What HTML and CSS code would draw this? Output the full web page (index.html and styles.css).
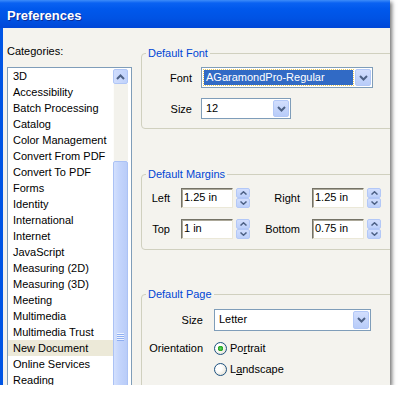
FILE: index.html
```html
<!DOCTYPE html>
<html lang="en">
<head>
    <meta charset="utf-8">
    <title>Preferences</title>
    <link rel="stylesheet" href="styles.css">
</head>
<body>

    <div class="window">
        <div class="titlebar"><span class="title">Preferences</span></div>

        <div class="content">
            <!-- categories list -->
            <div class="sidebar">
                <div class="cat-label">Categories:</div>
                <div class="listbox">
                    <ul class="items">
                        <li>3D</li>
                        <li>Accessibility</li>
                        <li>Batch Processing</li>
                        <li>Catalog</li>
                        <li>Color Management</li>
                        <li>Convert From PDF</li>
                        <li>Convert To PDF</li>
                        <li>Forms</li>
                        <li>Identity</li>
                        <li>International</li>
                        <li>Internet</li>
                        <li>JavaScript</li>
                        <li>Measuring (2D)</li>
                        <li>Measuring (3D)</li>
                        <li>Meeting</li>
                        <li>Multimedia</li>
                        <li>Multimedia Trust</li>
                        <li class="selected">New Document</li>
                        <li>Online Services</li>
                        <li>Reading</li>
                    </ul>
                    <div class="scrollbar">
                        <div class="sb-up">
                            <svg width="9" height="6" viewBox="0 0 9 6"><path d="M1 5 L4.5 1.5 L8 5" fill="none" stroke="#4d6185" stroke-width="2"/></svg>
                        </div>
                        <div class="sb-track"></div>
                        <div class="sb-thumb"><div class="grip"></div></div>
                    </div>
                </div>
            </div>

            <!-- settings -->
            <div class="panel">
                <fieldset class="group group-font">
                    <legend>Default Font</legend>
                    <div class="font-grid">
                        <span class="lbl">Font</span>
                        <div class="combo combo-font">
                            <span class="combo-value selected">AGaramondPro-Regular</span>
                            <span class="combo-btn"><svg width="9" height="6" viewBox="0 0 9 6"><path d="M1 1 L4.5 4.5 L8 1" fill="none" stroke="#4d6185" stroke-width="2"/></svg></span>
                        </div>
                        <span class="lbl">Size</span>
                        <div class="combo combo-size">
                            <span class="combo-value">12</span>
                            <span class="combo-btn"><svg width="9" height="6" viewBox="0 0 9 6"><path d="M1 1 L4.5 4.5 L8 1" fill="none" stroke="#4d6185" stroke-width="2"/></svg></span>
                        </div>
                    </div>
                </fieldset>

                <fieldset class="group group-margins">
                    <legend>Default Margins</legend>
                    <div class="margin-row">
                        <span class="lbl">Left</span>
                        <span class="field">1.25 in</span>
                        <span class="spin">
                            <span class="spin-btn"><svg width="7" height="4" viewBox="0 0 7 4"><path d="M0.5 3.5 L3.5 0.8 L6.5 3.5" fill="none" stroke="#4d6185" stroke-width="1.5"/></svg></span>
                            <span class="spin-btn"><svg width="7" height="4" viewBox="0 0 7 4"><path d="M0.5 0.5 L3.5 3.2 L6.5 0.5" fill="none" stroke="#4d6185" stroke-width="1.5"/></svg></span>
                        </span>
                        <span class="lbl wide">Right</span>
                        <span class="field">1.25 in</span>
                        <span class="spin">
                            <span class="spin-btn"><svg width="7" height="4" viewBox="0 0 7 4"><path d="M0.5 3.5 L3.5 0.8 L6.5 3.5" fill="none" stroke="#4d6185" stroke-width="1.5"/></svg></span>
                            <span class="spin-btn"><svg width="7" height="4" viewBox="0 0 7 4"><path d="M0.5 0.5 L3.5 3.2 L6.5 0.5" fill="none" stroke="#4d6185" stroke-width="1.5"/></svg></span>
                        </span>
                    </div>
                    <div class="margin-row">
                        <span class="lbl">Top</span>
                        <span class="field">1 in</span>
                        <span class="spin">
                            <span class="spin-btn"><svg width="7" height="4" viewBox="0 0 7 4"><path d="M0.5 3.5 L3.5 0.8 L6.5 3.5" fill="none" stroke="#4d6185" stroke-width="1.5"/></svg></span>
                            <span class="spin-btn"><svg width="7" height="4" viewBox="0 0 7 4"><path d="M0.5 0.5 L3.5 3.2 L6.5 0.5" fill="none" stroke="#4d6185" stroke-width="1.5"/></svg></span>
                        </span>
                        <span class="lbl wide">Bottom</span>
                        <span class="field">0.75 in</span>
                        <span class="spin">
                            <span class="spin-btn"><svg width="7" height="4" viewBox="0 0 7 4"><path d="M0.5 3.5 L3.5 0.8 L6.5 3.5" fill="none" stroke="#4d6185" stroke-width="1.5"/></svg></span>
                            <span class="spin-btn"><svg width="7" height="4" viewBox="0 0 7 4"><path d="M0.5 0.5 L3.5 3.2 L6.5 0.5" fill="none" stroke="#4d6185" stroke-width="1.5"/></svg></span>
                        </span>
                    </div>
                </fieldset>

                <fieldset class="group group-page">
                    <legend>Default Page</legend>
                    <div class="page-grid">
                        <span class="lbl">Size</span>
                        <div class="combo combo-page">
                            <span class="combo-value">Letter</span>
                            <span class="combo-btn"><svg width="9" height="6" viewBox="0 0 9 6"><path d="M1 1 L4.5 4.5 L8 1" fill="none" stroke="#4d6185" stroke-width="2"/></svg></span>
                        </div>
                        <span class="lbl">Orientation</span>
                        <div class="radios">
                            <label class="radio"><span class="dot checked"></span><span>Po<u>r</u>trait</span></label>
                            <label class="radio"><span class="dot"></span><span>L<u>a</u>ndscape</span></label>
                        </div>
                    </div>
                </fieldset>
            </div>
        </div>
    </div>

</body>
</html>
```

FILE: styles.css
```css
* {
    margin: 0;
    padding: 0;
    box-sizing: border-box;
}

body {
    background: #fff;
    font-family: "Liberation Sans", Arial, sans-serif;
    font-size: 11px;
    color: #000;
}

.window {
    width: 390px;
    height: 385px;
    background: #f4f3ee;
    box-shadow: 2px 2px 4px rgba(0, 0, 0, 0.55);
    overflow: hidden;
    display: flex;
    flex-direction: column;
}

/* title bar */
.titlebar {
    height: 28px;
    padding: 3px 0 0 7px;
    display: flex;
    align-items: center;
    background: linear-gradient(#3d8cf9 0, #0a62f2 3px, #0058ec 9px, #0053e4 18px, #0047d7 28px);
}

.title {
    color: #fff;
    font-weight: bold;
    font-size: 13px;
    text-shadow: 1px 1px 0 #0b2d9a;
}

.content {
    flex: 1;
    display: flex;
    gap: 9px;
    padding: 16px 0 0 4px;
    border-left: 3px solid #0055e5;
    min-height: 0;
}

/* categories */
.sidebar {
    width: 125px;
    flex-shrink: 0;
}

.cat-label {
    line-height: 14px;
}

.listbox {
    margin-top: 9px;
    height: 330px;
    display: flex;
    background: #fff;
    border: 1px solid #7f9db9;
}

.items {
    flex: 1;
    list-style: none;
}

.items li {
    height: 16px;
    line-height: 16px;
    padding-left: 5px;
    white-space: nowrap;
}

.items li.selected {
    background: #ece9d8;
}

.scrollbar {
    width: 18px;
    padding: 1px 3px 0 0;
    display: flex;
    flex-direction: column;
}

.sb-up {
    height: 15px;
    display: flex;
    align-items: center;
    justify-content: center;
    background: linear-gradient(90deg, #d0ddfd, #c0d2fb);
    border: 1px solid #b0c6f6;
    border-radius: 2px;
}

.sb-track {
    height: 77px;
    background: #f3f2ec;
    border-left: 1px solid #fdfdfb;
}

.sb-thumb {
    flex: 1;
    background: linear-gradient(90deg, #d3e0fd, #c4d5fc 40%, #b9ccf8);
    border: 1px solid #abc2f5;
    border-radius: 2px;
}

.grip {
    width: 7px;
    height: 8px;
    margin: 171px auto 0;
    background: repeating-linear-gradient(#eef3fe 0 1px, #8eaef2 1px 2px);
}

/* right panel */
.panel {
    flex: 1;
    margin-right: -30px;
    padding-top: 2px;
}

.group {
    border: 1px solid #d0d0bf;
    border-radius: 4px;
    padding: 0;
}

.group legend {
    margin-left: 4px;
    padding: 0 2px;
    line-height: 14px;
    color: #0046d5;
}

.lbl {
    text-align: right;
    white-space: nowrap;
}

.group-font {
    height: 83px;
}

.font-grid {
    display: grid;
    grid-template-columns: 45px auto;
    grid-auto-rows: 21px;
    column-gap: 9px;
    row-gap: 10px;
    align-items: center;
    padding: 7px 0 0 5px;
}

.combo {
    display: flex;
    height: 21px;
    padding: 1px;
    background: #fff;
    border: 1px solid #7f9db9;
}

.combo-font {
    width: 172px;
}

.combo-size {
    width: 90px;
}

.combo-page {
    width: 157px;
    height: 22px;
}

.combo-value {
    flex: 1;
    padding-left: 3px;
    line-height: 17px;
}

.combo-value.selected {
    margin: 1px 2px 1px 1px;
    padding-left: 2px;
    line-height: 15px;
    color: #fff;
    background: #316ac5;
    outline: 1px dotted #e9c95a;
}

.combo-btn {
    width: 16px;
    display: flex;
    align-items: center;
    justify-content: center;
    background: linear-gradient(#d2defd, #b8ccf9);
    border: 1px solid #b3c8f7;
    border-radius: 2px;
}

/* margins */
.group-margins {
    height: 83px;
    margin-top: 38px;
    padding-top: 7px;
}

.margin-row {
    display: flex;
    align-items: center;
    height: 20px;
}

.margin-row + .margin-row {
    margin-top: 11px;
}

.margin-row .lbl {
    width: 28px;
    margin-right: 11px;
}

.margin-row .lbl.wide {
    width: 50px;
    margin-right: 12px;
}

.field {
    width: 52px;
    height: 20px;
    padding-left: 2px;
    line-height: 17px;
    background: #fff;
    border: 1px solid;
    border-color: #747266 #ebe8d8 #ebe8d8 #747266;
    box-shadow: inset 1px 1px 0 #aca899;
}

.spin {
    width: 14px;
    height: 20px;
    margin-left: 3px;
    display: flex;
    flex-direction: column;
}

.spin-btn {
    flex: 1;
    display: flex;
    align-items: center;
    justify-content: center;
    background: linear-gradient(#d2defd, #bdd0fa);
    border: 1px solid #b3c8f7;
    border-radius: 2px;
}

/* page */
.group-page {
    height: 130px;
    margin-top: 37px;
}

.page-grid {
    display: grid;
    grid-template-columns: 54px auto;
    column-gap: 11px;
    row-gap: 10px;
    padding: 8px 0 0 7px;
}

.page-grid .lbl {
    line-height: 14px;
    align-self: center;
}

.page-grid .lbl:nth-of-type(2) {
    align-self: start;
}

.radios {
    display: flex;
    flex-direction: column;
    gap: 7px;
}

.radio {
    display: flex;
    align-items: center;
    gap: 3px;
    height: 14px;
}

.dot {
    width: 13px;
    height: 13px;
    border-radius: 50%;
    border: 1px solid #1c5180;
    background: radial-gradient(circle at 35% 35%, #fff 30%, #dcd9c9);
}

.dot.checked {
    background: radial-gradient(circle, #5ed85e 0, #21a121 2.5px, transparent 3px),
        radial-gradient(circle at 35% 35%, #fff 30%, #dcd9c9);
}
```
